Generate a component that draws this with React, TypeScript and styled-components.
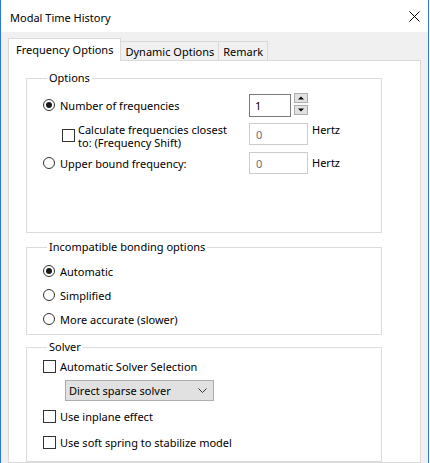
import styled, { createGlobalStyle } from "styled-components";

const GlobalStyle = createGlobalStyle`
    * {
        box-sizing: border-box;
    }
    body {
        margin: 0;
        background: #ffffff;
        font-family: "Noto Sans", "DejaVu Sans", sans-serif;
        font-size: 11px;
        color: #000000;
    }
`;

const Radio = ({ checked = false }: { checked?: boolean }) => (
    <RadioCircle>{checked && <RadioDot />}</RadioCircle>
);

const Option = ({ label, checked }: { label: string; checked?: boolean }) => (
    <Choice>
        <Radio checked={checked} />
        <span>{label}</span>
    </Choice>
);

const Check = ({ label }: { label: string }) => (
    <Choice $gap={4}>
        <CheckBox />
        <span>{label}</span>
    </Choice>
);

const App = () => {
    return (
        <>
            <GlobalStyle />
            <Window>
                <TitleBar>
                    <Title>Modal Time History</Title>
                    <CloseButton>
                        <svg width="11" height="11" viewBox="0 0 11 11">
                            <path d="M0.5 0.5 L10.5 10.5 M10.5 0.5 L0.5 10.5" stroke="#000" strokeWidth="1" />
                        </svg>
                    </CloseButton>
                </TitleBar>
                <Body>
                    <Tabs>
                        <Tab $active>Frequency Options</Tab>
                        <Tab>Dynamic Options</Tab>
                        <Tab>Remark</Tab>
                    </Tabs>
                    <Panel>
                        <Group $height={163}>
                            <Legend>Options</Legend>
                            <OptionsGrid>
                                <Option label="Number of frequencies" checked />
                                <SpinWrap>
                                    <SpinInput>1</SpinInput>
                                    <Spinner>
                                        <SpinButton>
                                            <svg width="6" height="4" viewBox="0 0 6 4">
                                                <path d="M0 3.5 L3 0.5 L6 3.5 Z" fill="#000" />
                                            </svg>
                                        </SpinButton>
                                        <SpinButton>
                                            <svg width="6" height="4" viewBox="0 0 6 4">
                                                <path d="M0 0.5 L3 3.5 L6 0.5 Z" fill="#000" />
                                            </svg>
                                        </SpinButton>
                                    </Spinner>
                                </SpinWrap>
                                <span />

                                <ShiftRow>
                                    <CheckBox />
                                    <ShiftText>
                                        Calculate frequencies closest
                                        <br />
                                        to: (Frequency Shift)
                                    </ShiftText>
                                </ShiftRow>
                                <TextField>0</TextField>
                                <Unit $top>Hertz</Unit>

                                <Option label="Upper bound frequency:" />
                                <TextField>0</TextField>
                                <Unit>Hertz</Unit>
                            </OptionsGrid>
                        </Group>

                        <Group $height={96} $gap={6}>
                            <Legend>Incompatible bonding options</Legend>
                            <Stack $top={6} $gap={4}>
                                <Option label="Automatic" checked />
                                <Option label="Simplified" />
                                <Option label="More accurate (slower)" />
                            </Stack>
                        </Group>

                        <Group $height={123} $gap={4}>
                            <Legend>Solver</Legend>
                            <Stack $top={1} $gap={6}>
                                <Check label="Automatic Solver Selection" />
                                <Select>
                                    <span>Direct sparse solver</span>
                                    <svg width="9" height="5" viewBox="0 0 9 5">
                                        <path d="M0.5 0.5 L4.5 4.5 L8.5 0.5" fill="none" stroke="#333" strokeWidth="1" />
                                    </svg>
                                </Select>
                                <Check label="Use inplane effect" />
                                <Check label="Use soft spring to stabilize model" />
                            </Stack>
                        </Group>
                    </Panel>
                </Body>
            </Window>
        </>
    );
};

const Window = styled.div`
    width: 429px;
    height: 463px;
    display: flex;
    flex-direction: column;
    border-left: 1px solid #2b79d6;
    border-right: 1px solid #2b79d6;
    overflow: hidden;
`;

const TitleBar = styled.div`
    height: 32px;
    flex-shrink: 0;
    background: #ffffff;
    display: flex;
    align-items: center;
    justify-content: space-between;
    padding: 2px 8px 0 9px;
`;

const Title = styled.div`
    font-size: 11px;
`;

const CloseButton = styled.div`
    display: flex;
    align-items: center;
    margin-top: -1px;
`;

const Body = styled.div`
    flex: 1;
    display: flex;
    flex-direction: column;
    background: #f0f0f0;
    padding: 6px 7px 0 7px;
`;

const Tabs = styled.div`
    height: 22px;
    display: flex;
    align-items: flex-end;
`;

const Tab = styled.div<{ $active?: boolean }>`
    height: ${(p) => (p.$active ? "23px" : "19px")};
    margin-bottom: ${(p) => (p.$active ? "-1px" : "0")};
    padding: ${(p) => (p.$active ? "0 7px" : "0 4px")};
    padding-bottom: ${(p) => (p.$active ? "1px" : "0")};
    background: ${(p) => (p.$active ? "#ffffff" : "#f0f0f0")};
    border: 1px solid #d9d9d9;
    border-bottom: none;
    margin-left: ${(p) => (p.$active ? "0" : "-1px")};
    position: relative;
    z-index: ${(p) => (p.$active ? 1 : 0)};
    display: flex;
    align-items: center;
    white-space: nowrap;
`;

const Panel = styled.div`
    flex: 1;
    background: #ffffff;
    border: 1px solid #d9d9d9;
    padding: 9px 0 0 17px;
`;

const Group = styled.fieldset<{ $height: number; $gap?: number }>`
    width: 356px;
    height: ${(p) => p.$height}px;
    margin: ${(p) => p.$gap ?? 0}px 0 0 0;
    padding: 0 0 0 16px;
    border: 1px solid #dcdcdc;
    min-width: 0;
`;

const Legend = styled.legend`
    padding: 0 2px;
    margin-left: 4px;
    line-height: 16px;
`;

const OptionsGrid = styled.div`
    display: grid;
    grid-template-columns: 202px 59px auto;
    grid-auto-rows: 22px;
    align-items: center;
    row-gap: 7px;
    column-gap: 4px;
    padding-top: 8px;
`;

const Stack = styled.div<{ $top: number; $gap: number }>`
    display: flex;
    flex-direction: column;
    align-items: flex-start;
    gap: ${(p) => p.$gap}px;
    padding-top: ${(p) => p.$top}px;
`;

const Choice = styled.div<{ $gap?: number }>`
    height: 20px;
    display: flex;
    align-items: center;
    gap: ${(p) => p.$gap ?? 5}px;
    white-space: nowrap;
`;

const RadioCircle = styled.span`
    width: 12px;
    height: 12px;
    border: 1px solid #333333;
    border-radius: 50%;
    background: #ffffff;
    display: flex;
    align-items: center;
    justify-content: center;
    flex-shrink: 0;
`;

const RadioDot = styled.span`
    width: 6px;
    height: 6px;
    border-radius: 50%;
    background: #1a1a1a;
`;

const CheckBox = styled.span`
    width: 13px;
    height: 13px;
    border: 1px solid #333333;
    background: #ffffff;
    flex-shrink: 0;
`;

const ShiftRow = styled.div`
    display: flex;
    align-items: center;
    gap: 3px;
    padding-left: 19px;
    margin-top: 3px;
`;

const ShiftText = styled.div`
    line-height: 13px;
`;

const SpinWrap = styled.div`
    display: flex;
    align-items: flex-start;
    gap: 3px;
`;

const SpinInput = styled.div`
    width: 44px;
    height: 23px;
    border: 1px solid #7a7a7a;
    padding: 0 5px;
    display: flex;
    align-items: center;
`;

const Spinner = styled.div`
    display: flex;
    flex-direction: column;
    gap: 2px;
    margin-top: -1px;
`;

const SpinButton = styled.div`
    width: 14px;
    height: 10px;
    background: #e1e1e1;
    border: 1px solid #adadad;
    display: flex;
    align-items: center;
    justify-content: center;
`;

const TextField = styled.div`
    width: 59px;
    height: 22px;
    border: 1px solid #cccccc;
    color: #6d6d6d;
    padding: 0 6px;
    display: flex;
    align-items: center;
`;

const Unit = styled.div<{ $top?: boolean }>`
    align-self: ${(p) => (p.$top ? "start" : "center")};
    line-height: 16px;
    margin-top: ${(p) => (p.$top ? "-1px" : "0")};
`;

const Select = styled.div`
    width: 149px;
    height: 21px;
    margin-left: 22px;
    margin-top: -2px;
    margin-bottom: -1px;
    background: #e1e1e1;
    border: 1px solid #adadad;
    display: flex;
    align-items: center;
    justify-content: space-between;
    padding: 0 6px 0 3px;
`;

export default App;
